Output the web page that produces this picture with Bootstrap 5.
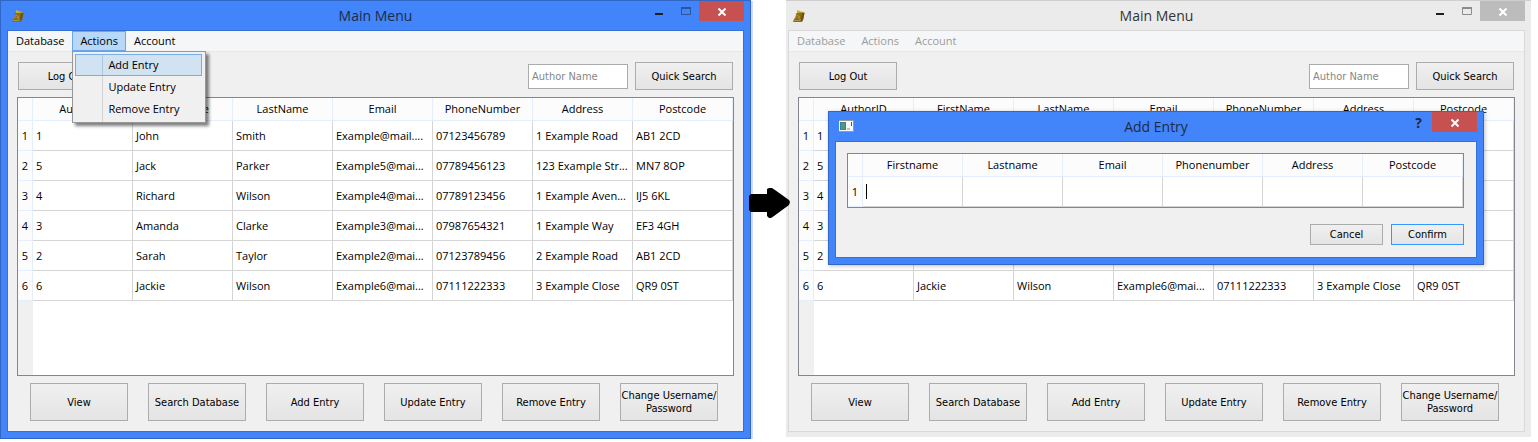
<!DOCTYPE html>
<html lang="en">
<head>
<meta charset="utf-8">
<meta name="viewport" content="width=device-width, initial-scale=1">
<title>Main Menu - Add Entry</title>
<link rel="stylesheet" href="https://cdn.jsdelivr.net/npm/bootstrap@5.3.0/dist/css/bootstrap.min.css">
<style>
  :root { --frame: #4284fa; --frame-edge: #3066c4; --face: #f0f0f0; }
  body { background: #fff; color: #000; font: 11px/16px "Open Sans", sans-serif; }

  .stage { display: grid; grid-template-columns: 753fr 33fr 745fr 7fr; align-items: start; }

  /* window frames */
  .win { background: var(--frame); border: 1px solid var(--frame-edge); padding: 0 6px 6px; }
  .win-main { margin-right: 2px; box-shadow: 2px 1px 0 #cfdcf2; }
  .win-idle { background: #ebebeb; border: 0; border-top: 1px solid #cfcfcf; padding: 0 6px 5px 2px; }
  .titlebar { display: grid; grid-template-columns: 1fr auto 1fr; height: 29px; }
  .titlebar h1, .titlebar h2 { font-size: 14px; line-height: 29px; font-weight: 400; margin: 0; color: #1f2b45; }
  .win-idle > .titlebar h1 { color: #333; }
  .app-icon { margin: 7px 0 0 4px; display: block; }
  .ctl { border: 0; padding: 0; background: transparent; height: 20px; display: block; }
  .ctl svg { display: block; }
  .ctl-small { width: 27px; }
  .ctl-close { width: 45px; background: #c75050; }
  .win-idle > .titlebar .ctl-close { background: #bcbcbc; }
  .client { background: var(--face); border: 1px solid #3570d6; }
  .win-idle > .client { border-color: #d9d9d9; }

  /* menu bar */
  .menubar { background: #f5f6f7; border-bottom: 1px solid #e6e8ea; height: 21px; }
  .menubar .nav-link { color: #000; background: transparent; border: 0; padding: 0 8px; height: 20px; line-height: 20px; border-radius: 0; }
  .menubar .nav-link.show { background: #b7d8f8; box-shadow: inset 0 0 0 1px #6aa8e6; }
  .menubar .nav-link:disabled { color: #9c9c9c; }
  .actions-menu { top: 20px; left: 0; min-width: 134px; padding: 2px 3px 2px 2px; margin: 0; border: 1px solid #979797; border-radius: 0;
    background: linear-gradient(to right, transparent 27px, #d4d4d4 27px 28px, transparent 28px) 2px 2px no-repeat, #f0f0f0;
    box-shadow: 3px 3px 3px rgba(0,0,0,.5); font-size: 11px; color: #000; }
  .actions-menu .dropdown-item { color: #000; padding: 0 0 0 33px; line-height: 22px; }
  .actions-menu .dropdown-item.picked { background: linear-gradient(to right, transparent 27px, #afc6dc 27px 28px, transparent 28px) #d1e2f2; box-shadow: inset 0 0 0 1px #78aee5; }

  /* controls */
  .push { font: 11px/13px "DejaVu Sans Condensed", sans-serif; color: #000; background: linear-gradient(#f0f0f0, #e4e4e4); border: 1px solid #acacac; border-radius: 0; padding: 0; width: 98px; transition: none; }
  .push.push-default { border: 1px solid #3399ff; }
  .h28 { height: 28px; } .h38 { height: 38px; }
  .push-dialog { width: 73px; height: 21px; }
  .author-box { width: 100px; height: 25px; font: 11px/15px "DejaVu Sans Condensed", sans-serif; border: 1px solid #ababab; border-radius: 0; padding: 0 3px; margin: 0 7px 0 auto; }
  .author-box::placeholder { color: #868686; opacity: 1; }
  .toolrow { padding: 10px 10px 7px; }
  .actionrow { padding: 7px 25px 10px 22px; }

  /* data grids */
  .sheet { border: 1px solid #82868f; background: linear-gradient(to right, #f0f0f0 15px, #fff 15px); }
  .sheet-main { min-height: 279px; margin: 0 9px; }
  .sheet table { width: 100%; table-layout: fixed; border-collapse: separate; border-spacing: 0; }
  .sheet th, .sheet td { font-weight: 400; white-space: nowrap; overflow: hidden; }
  .sheet th { background: #fcfcfd; border: solid #e4eefc; border-width: 0 1px 1px 0; text-align: center; padding: 0; }
  .sheet thead th { height: 23px; }
  .sheet thead th:first-child { width: 15px; }
  .sheet td { height: 30px; background: #fff; border: solid #d5d5d5; border-width: 0 1px 1px 0; padding: 0 3px; }

  /* dialog */
  .dlg { position: absolute; top: 110px; left: 42px; right: 47px; box-shadow: 1px 1px 4px rgba(0,0,0,.25); }
  .dlg .client { padding: 11px 12px 12px 11px; }
  .sheet-entry td { padding: 0; position: relative; }
  .sheet-entry input { display: block; width: 100%; height: 29px; border: 0; padding: 0 3px; outline: 0; background: transparent; }
  .caret-bar { position: absolute; left: 3px; top: 7px; width: 1px; height: 15px; background: #000; }
  .help { font: bold 14px/22px "Open Sans", sans-serif; color: #1c2740; width: 27px; height: 20px; }

  .flow-arrow { position: absolute; left: -4px; top: 187px; z-index: 2; }
</style>
</head>
<body>
<svg width="0" height="0" class="position-absolute" aria-hidden="true">
  <symbol id="books" viewBox="0 0 15 16">
    <path d="M5 2 9 3.500 12 4 11 6 5 5.500Z" fill="#c6b52a"/>
    <path d="M4.500 5 12.500 4.500 11.500 11 10 14 1 14 2 11 3 10Z" fill="#8d6e17"/>
    <path d="M12.500 5 11 11 10 13.500 9 11 10 5Z" fill="#6e5310"/>
    <path d="M3 10.500 5 7 8 9 6 9.500 8.500 12M2 12.500H8" fill="none" stroke="#c4ae70" stroke-width=".5"/>
  </symbol>
  <symbol id="dash" viewBox="0 0 27 20"><path d="M1 12H9V14H1Z" fill="#1e1e1e"/></symbol>
  <symbol id="box" viewBox="0 0 27 20"><path d="M.500 7H9.500V13.500H.500Z" fill="none" stroke="currentColor"/><path d="M0 6H10V8H0Z" fill="currentColor"/></symbol>
  <symbol id="cross" viewBox="0 0 45 20"><path d="M19.500 7.500 26.500 14.500M26.500 7.500 19.500 14.500" stroke="#fff" stroke-width="2"/></symbol>
</svg>

<main class="stage">
  <section class="win win-main" aria-label="Main Menu with Actions menu open">
    <header class="titlebar">
      <svg class="app-icon" width="15" height="16"><use href="#books"/></svg>
      <h1>Main Menu</h1>
      <div class="d-flex justify-content-end">
        <button class="ctl ctl-small" aria-label="Minimize"><svg width="27" height="20"><use href="#dash"/></svg></button>
        <button class="ctl" aria-label="Maximize" style="color:#2b53a0"><svg width="18" height="20"><use href="#box" width="27" height="20"/></svg></button>
        <button class="ctl ctl-close" aria-label="Close"><svg width="45" height="20"><use href="#cross"/></svg></button>
      </div>
    </header>
    <div class="client">
      <nav class="menubar nav flex-nowrap">
        <button class="nav-link">Database</button>
        <div class="dropdown">
          <button class="nav-link show" aria-expanded="true">Actions</button>
          <div class="dropdown-menu actions-menu show">
            <button class="dropdown-item picked">Add Entry</button>
            <button class="dropdown-item">Update Entry</button>
            <button class="dropdown-item">Remove Entry</button>
          </div>
        </div>
        <button class="nav-link">Account</button>
      </nav>
      <div class="toolrow d-flex align-items-center">
        <button class="btn push h28">Log Out</button>
        <input class="form-control author-box" type="text" placeholder="Author Name" aria-label="Author Name">
        <button class="btn push h28">Quick Search</button>
      </div>
      <div class="sheet sheet-main">
        <table>
          <thead><tr><th></th><th>AuthorID</th><th>FirstName</th><th>LastName</th><th>Email</th><th>PhoneNumber</th><th>Address</th><th>Postcode</th></tr></thead>
          <tbody>
            <tr><th>1</th><td>1</td><td>John</td><td>Smith</td><td>Example@mail....</td><td>07123456789</td><td>1 Example Road</td><td>AB1 2CD</td></tr>
            <tr><th>2</th><td>5</td><td>Jack</td><td>Parker</td><td>Example5@mai...</td><td>07789456123</td><td>123 Example Str...</td><td>MN7 8OP</td></tr>
            <tr><th>3</th><td>4</td><td>Richard</td><td>Wilson</td><td>Example4@mai...</td><td>07789123456</td><td>1 Example Aven...</td><td>IJ5 6KL</td></tr>
            <tr><th>4</th><td>3</td><td>Amanda</td><td>Clarke</td><td>Example3@mai...</td><td>07987654321</td><td>1 Example Way</td><td>EF3 4GH</td></tr>
            <tr><th>5</th><td>2</td><td>Sarah</td><td>Taylor</td><td>Example2@mai...</td><td>07123789456</td><td>2 Example Road</td><td>AB1 2CD</td></tr>
            <tr><th>6</th><td>6</td><td>Jackie</td><td>Wilson</td><td>Example6@mai...</td><td>07111222333</td><td>3 Example Close</td><td>QR9 0ST</td></tr>
          </tbody>
        </table>
      </div>
      <div class="actionrow d-flex justify-content-between">
        <button class="btn push h38">View</button>
        <button class="btn push h38">Search Database</button>
        <button class="btn push h38">Add Entry</button>
        <button class="btn push h38">Update Entry</button>
        <button class="btn push h38">Remove Entry</button>
        <button class="btn push h38">Change Username/<br>Password</button>
      </div>
    </div>
  </section>

  <div class="position-relative">
    <svg class="flow-arrow" width="42" height="32" viewBox="0 0 42 32" role="img" aria-label="leads to"><path d="M2 7H18V2L20 1H23L26 3 40 13 41 15 40 18 25 29 22 31H20L18 29V25H2L0 23V9Z"/></svg>
  </div>

  <section class="win win-idle position-relative" aria-label="Main Menu behind dialog">
    <header class="titlebar">
      <svg class="app-icon" width="15" height="16"><use href="#books"/></svg>
      <h1>Main Menu</h1>
      <div class="d-flex justify-content-end">
        <button class="ctl ctl-small" aria-label="Minimize"><svg width="27" height="20"><use href="#dash"/></svg></button>
        <button class="ctl" aria-label="Maximize" style="color:#8c8c8c"><svg width="18" height="20"><use href="#box" width="27" height="20"/></svg></button>
        <button class="ctl ctl-close" aria-label="Close"><svg width="45" height="20"><use href="#cross"/></svg></button>
      </div>
    </header>
    <div class="client">
      <nav class="menubar nav flex-nowrap">
        <button class="nav-link" disabled>Database</button>
        <button class="nav-link" disabled>Actions</button>
        <button class="nav-link" disabled>Account</button>
      </nav>
      <div class="toolrow d-flex align-items-center">
        <button class="btn push h28">Log Out</button>
        <input class="form-control author-box" type="text" placeholder="Author Name" aria-label="Author Name">
        <button class="btn push h28">Quick Search</button>
      </div>
      <div class="sheet sheet-main">
        <table>
          <thead><tr><th></th><th>AuthorID</th><th>FirstName</th><th>LastName</th><th>Email</th><th>PhoneNumber</th><th>Address</th><th>Postcode</th></tr></thead>
          <tbody>
            <tr><th>1</th><td>1</td><td></td><td></td><td></td><td></td><td></td><td></td></tr>
            <tr><th>2</th><td>5</td><td></td><td></td><td></td><td></td><td></td><td></td></tr>
            <tr><th>3</th><td>4</td><td></td><td></td><td></td><td></td><td></td><td></td></tr>
            <tr><th>4</th><td>3</td><td></td><td></td><td></td><td></td><td></td><td></td></tr>
            <tr><th>5</th><td>2</td><td></td><td></td><td></td><td></td><td></td><td></td></tr>
            <tr><th>6</th><td>6</td><td>Jackie</td><td>Wilson</td><td>Example6@mai...</td><td>07111222333</td><td>3 Example Close</td><td>QR9 0ST</td></tr>
          </tbody>
        </table>
      </div>
      <div class="actionrow d-flex justify-content-between">
        <button class="btn push h38">View</button>
        <button class="btn push h38">Search Database</button>
        <button class="btn push h38">Add Entry</button>
        <button class="btn push h38">Update Entry</button>
        <button class="btn push h38">Remove Entry</button>
        <button class="btn push h38">Change Username/<br>Password</button>
      </div>
    </div>

    <div class="win dlg" role="dialog" aria-labelledby="dlg-title">
      <header class="titlebar">
        <svg class="d-block mt-2 ms-1" width="15" height="13" viewBox="0 0 15 13">
          <path d="M0 0H15V12H0Z" fill="#999"/><path d="M0 1H14V11H0Z" fill="#f8f8f8"/>
          <path d="M1 2H7V10H1Z" fill="#3f7d9c"/><path d="M2 3H6V9H2Z" fill="#4a9b7c"/>
          <path d="M8 8H11V10H8Z" fill="#bcc4c8"/><path d="M12 2H13V6H12Z" fill="#2e6c7c"/>
        </svg>
        <h2 id="dlg-title">Add Entry</h2>
        <div class="d-flex justify-content-end">
          <button class="ctl help" aria-label="Help">?</button>
          <button class="ctl ctl-close" aria-label="Close"><svg width="45" height="20"><use href="#cross"/></svg></button>
        </div>
      </header>
      <div class="client">
        <div class="sheet sheet-entry">
          <table>
            <thead><tr><th></th><th>Firstname</th><th>Lastname</th><th>Email</th><th>Phonenumber</th><th>Address</th><th>Postcode</th></tr></thead>
            <tbody><tr><th>1</th>
              <td><input type="text" aria-label="Firstname"><span class="caret-bar"></span></td>
              <td><input type="text" aria-label="Lastname"></td>
              <td><input type="text" aria-label="Email"></td>
              <td><input type="text" aria-label="Phonenumber"></td>
              <td><input type="text" aria-label="Address"></td>
              <td><input type="text" aria-label="Postcode"></td>
            </tr></tbody>
          </table>
        </div>
        <div class="d-flex justify-content-end gap-2 mt-3">
          <button class="btn push push-dialog">Cancel</button>
          <button class="btn push push-dialog push-default">Confirm</button>
        </div>
      </div>
    </div>
  </section>
</main>
<script src="https://cdn.jsdelivr.net/npm/bootstrap@5.3.0/dist/js/bootstrap.bundle.min.js"></script>
</body>
</html>
